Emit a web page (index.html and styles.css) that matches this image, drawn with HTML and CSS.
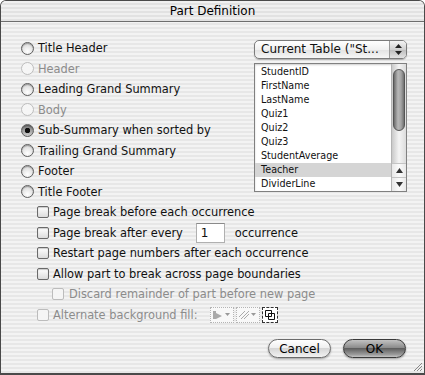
FILE: index.html
```html
<!DOCTYPE html>
<html lang="en">
<head>
  <meta charset="UTF-8" />
  <title>Part Definition</title>
  <link rel="stylesheet" href="styles.css">
</head>
<body>
  <div class="window">
    <div class="titlebar">Part Definition</div>

    <div class="content">
      <div class="top">
        <ul class="parts">
          <li class="row"><span class="radio"></span>Title Header</li>
          <li class="row disabled"><span class="radio"></span>Header</li>
          <li class="row"><span class="radio"></span>Leading Grand Summary</li>
          <li class="row disabled"><span class="radio"></span>Body</li>
          <li class="row"><span class="radio on"></span>Sub-Summary when sorted by</li>
          <li class="row"><span class="radio"></span>Trailing Grand Summary</li>
          <li class="row"><span class="radio"></span>Footer</li>
          <li class="row"><span class="radio"></span>Title Footer</li>
        </ul>

        <div class="side">
          <div class="popup">
            <span class="popup-label">Current Table ("St...</span>
            <span class="popup-arrows">
              <svg width="7" height="11" viewBox="0 0 7 11"><path d="M3.5 0 L7 4 L0 4 Z M0 7 L7 7 L3.5 11 Z" fill="#222"/></svg>
            </span>
          </div>

          <div class="listbox">
            <ul class="fields">
              <li>StudentID</li>
              <li>FirstName</li>
              <li>LastName</li>
              <li>Quiz1</li>
              <li>Quiz2</li>
              <li>Quiz3</li>
              <li>StudentAverage</li>
              <li class="selected">Teacher</li>
              <li>DividerLine</li>
            </ul>
            <div class="scrollbar">
              <div class="track"><div class="thumb"></div></div>
              <div class="arrow">
                <svg width="7" height="5" viewBox="0 0 7 5"><path d="M3.5 0 L7 5 L0 5 Z" fill="#333"/></svg>
              </div>
              <div class="arrow">
                <svg width="7" height="5" viewBox="0 0 7 5"><path d="M0 0 L7 0 L3.5 5 Z" fill="#333"/></svg>
              </div>
            </div>
          </div>
        </div>
      </div>

      <ul class="options">
        <li class="row"><span class="check"></span>Page break before each occurrence</li>
        <li class="row"><span class="check"></span>Page break after every<span class="field">1</span>occurrence</li>
        <li class="row"><span class="check"></span>Restart page numbers after each occurrence</li>
        <li class="row"><span class="check"></span>Allow part to break across page boundaries</li>
        <li class="row sub disabled"><span class="check"></span>Discard remainder of part before new page</li>
        <li class="row disabled"><span class="check"></span>Alternate background fill:
          <span class="fills">
            <span class="fill-pop">
              <svg width="10" height="8" viewBox="0 0 10 8"><path d="M0 0 H3 V8 H0 Z M3 2 L9 5 L3 8 Z" fill="#aaa"/></svg>
              <svg width="5" height="3" viewBox="0 0 5 3"><path d="M0 0 H5 L2.5 3 Z" fill="#999"/></svg>
            </span>
            <span class="fill-pop">
              <svg width="10" height="8" viewBox="0 0 10 8"><path d="M0 6 L6 0 M2 8 L10 0 M5 8 L10 3" stroke="#aaa" stroke-width="1"/></svg>
              <svg width="5" height="3" viewBox="0 0 5 3"><path d="M0 0 H5 L2.5 3 Z" fill="#999"/></svg>
            </span>
            <span class="fill-btn">
              <svg width="10" height="10" viewBox="0 0 10 10"><path d="M0.5 0.5 H6.5 V6.5 H0.5 Z M3.5 3.5 H9.5 V9.5 H3.5 Z" fill="none" stroke="#111" stroke-width="1"/></svg>
            </span>
          </span>
        </li>
      </ul>

      <div class="buttons">
        <button class="btn">Cancel</button>
        <button class="btn default">OK</button>
      </div>
    </div>

    <div class="grip">
      <svg width="12" height="12" viewBox="0 0 12 12"><path d="M11 3 L3 11 M11 6 L6 11 M11 9 L9 11" stroke="#888" stroke-width="1"/></svg>
    </div>
  </div>
</body>
</html>
```

FILE: styles.css
```css
* {
  margin: 0;
  padding: 0;
  box-sizing: border-box;
}

body {
  font-family: 'DejaVu Sans', sans-serif;
  font-size: 11.4px;
  color: #111;
  background: #fff;
}

ul {
  list-style: none;
}

.window {
  position: relative;
  width: 425px;
  height: 375px;
  border: 1px solid #4a4a4a;
  border-bottom-width: 2px;
  border-radius: 6px 6px 0 0;
  overflow: hidden;
  background: repeating-linear-gradient(#f3f3f3 0 2px, #e7e7e7 2px 4px);
}

.titlebar {
  height: 21px;
  border-bottom: 1px solid #6e6e6e;
  text-align: center;
  font-size: 12px;
  line-height: 20px;
  color: #000;
  background: repeating-linear-gradient(#f0f0f0 0 2px, #e2e2e2 2px 4px);
}

.content {
  padding: 16px 17px 0 20px;
}

.top {
  display: flex;
  justify-content: space-between;
}

.row {
  display: flex;
  align-items: center;
  height: 20.5px;
  white-space: nowrap;
}

.row.disabled {
  color: #8c8c8c;
}

/* radio buttons */
.radio {
  width: 13px;
  height: 13px;
  margin-right: 4px;
  border-radius: 50%;
  border: 1px solid #5e5e5e;
  background: radial-gradient(circle at 50% 75%, #ffffff, #d8d8d8 80%);
  box-shadow: inset 0 1px 1px rgba(0, 0, 0, 0.3);
}

.radio.on {
  background: radial-gradient(circle, #111 0 2.5px, transparent 3px),
    linear-gradient(#777, #cfcfcf);
}

.disabled .radio {
  border-color: #bdbdbd;
  background: #f6f6f6;
  box-shadow: none;
}

/* right side */
.side {
  width: 153px;
  margin-top: 2px;
}

.popup {
  display: flex;
  height: 19px;
  border: 1px solid #7b7b7b;
  border-radius: 5px;
  background: linear-gradient(#ffffff, #f1f1f1 50%, #e2e2e2 51%, #f6f6f6);
  box-shadow: 0 1px 1px rgba(0, 0, 0, 0.25);
  overflow: hidden;
}

.popup-label {
  flex: 1;
  padding-left: 6px;
  font-size: 12px;
  line-height: 17px;
}

.popup-arrows {
  display: flex;
  align-items: center;
  justify-content: center;
  width: 17px;
  border-left: 1px solid #9a9a9a;
  background: linear-gradient(#f4f4f4, #d0d0d0 50%, #bcbcbc 51%, #e2e2e2);
}

.listbox {
  display: flex;
  height: 129px;
  margin-top: 4px;
  border: 1px solid #808080;
  background: #fff;
  box-shadow: inset 0 1px 2px rgba(0, 0, 0, 0.2);
}

.fields {
  flex: 1;
  padding-top: 1px;
  font-size: 9.6px;
}

.fields li {
  height: 14px;
  line-height: 14px;
  padding-left: 6px;
}

.fields li.selected {
  background: #d5d5d5;
}

.scrollbar {
  display: flex;
  flex-direction: column;
  width: 15px;
  border-left: 1px solid #b4b4b4;
}

.track {
  flex: 1;
  padding: 5px 1px 0;
  background: linear-gradient(to right, #c9c9c9, #f4f4f4 50%, #dcdcdc);
}

.thumb {
  height: 62px;
  border: 1px solid #555;
  border-radius: 6px;
  background: linear-gradient(to right, #6c6c6c, #b8b8b8 40%, #a4a4a4 70%, #707070);
}

.arrow {
  display: flex;
  align-items: center;
  justify-content: center;
  height: 14px;
  border-top: 1px solid #c4c4c4;
  background: linear-gradient(to right, #e8e8e8, #fbfbfb 50%, #e8e8e8);
}

/* checkboxes */
.options .row {
  padding-left: 16px;
}

.options .row.sub {
  padding-left: 31px;
}

.check {
  width: 12px;
  height: 12px;
  margin-right: 4px;
  border: 1px solid #6a6a6a;
  border-radius: 2px;
  background: linear-gradient(#ffffff, #dcdcdc);
  box-shadow: inset 0 1px 1px rgba(0, 0, 0, 0.2);
}

.sub .check {
  margin-right: 5px;
}

.disabled .check {
  border-color: #bcbcbc;
  background: #f5f5f5;
  box-shadow: none;
}

.field {
  width: 29px;
  height: 20px;
  margin: 0 10px 0 13px;
  padding-left: 4px;
  line-height: 19px;
  font-size: 12px;
  border: 1px solid #b0b0b0;
  border-top-color: #8a8a8a;
  background: #fff;
}

.fills {
  display: flex;
  gap: 2px;
  margin-left: 12px;
}

.fill-pop,
.fill-btn {
  display: flex;
  align-items: center;
  justify-content: center;
  gap: 2px;
  height: 16px;
  border: 1px dotted #b4b4b4;
  background: #f8f8f8;
}

.fill-pop {
  width: 24px;
}

.fill-btn {
  width: 16px;
  border: 1px dashed #333;
  background: #fff;
}

/* buttons */
.buttons {
  display: flex;
  justify-content: flex-end;
  gap: 12px;
  margin-top: 14px;
  padding-right: 1px;
}

.btn {
  width: 63px;
  height: 19px;
  border: 1px solid #6b6b6b;
  border-radius: 10px;
  font-family: 'DejaVu Sans', sans-serif;
  font-size: 12px;
  color: #000;
  background: linear-gradient(#ffffff, #f0f0f0 45%, #d6d6d6 50%, #f2f2f2);
  box-shadow: 0 1px 2px rgba(0, 0, 0, 0.35);
}

.btn.default {
  border-color: #3a3a3a;
  background: linear-gradient(#c2c2c2, #8c8c8c 45%, #5f5f5f 50%, #9a9a9a 85%, #c4c4c4);
}

.grip {
  position: absolute;
  right: 1px;
  bottom: 1px;
  display: flex;
}
```
